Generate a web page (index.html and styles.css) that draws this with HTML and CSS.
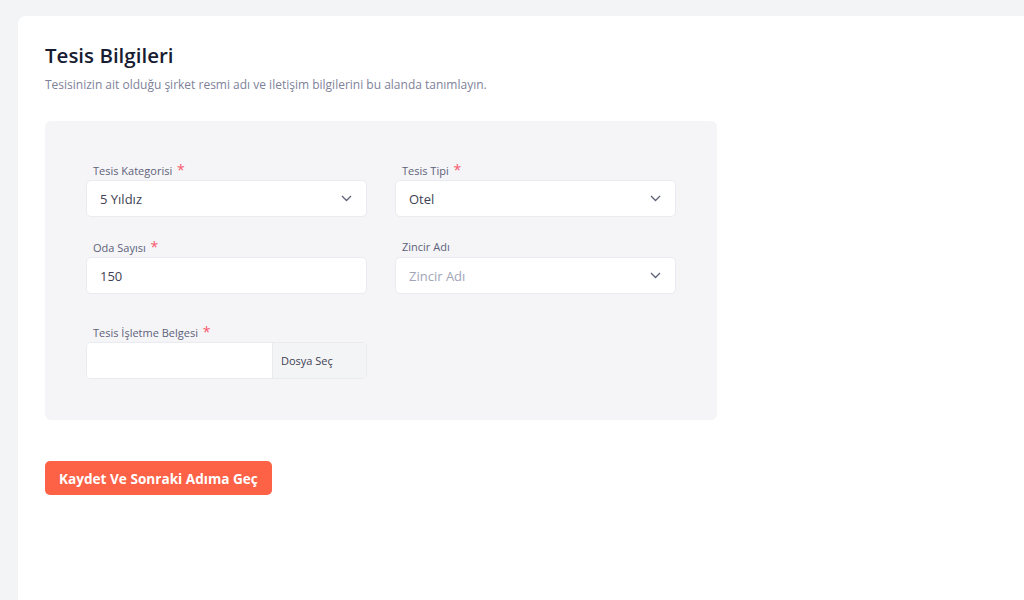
FILE: index.html
```html
<!DOCTYPE html>
<html lang="tr">
<head>
<meta charset="utf-8">
<title>Tesis Bilgileri</title>
<link rel="stylesheet" href="styles.css">
</head>
<body>
<main class="card">
  <h1 class="title">Tesis Bilgileri</h1>
  <p class="subtitle">Tesisinizin ait olduğu şirket resmi adı ve iletişim bilgilerini bu alanda tanımlayın.</p>

  <form class="panel">
    <div class="grid">
      <div class="field">
        <label class="label">Tesis Kategorisi <span class="req">*</span></label>
        <div class="control select">
          <span class="value">5 Yıldız</span>
          <svg class="chev" width="11" height="7" viewBox="0 0 11 7"><path d="M1 1l4.5 4.5L10 1" fill="none" stroke="#5e6278" stroke-width="1.3"/></svg>
        </div>
      </div>
      <div class="field">
        <label class="label">Tesis Tipi <span class="req">*</span></label>
        <div class="control select">
          <span class="value">Otel</span>
          <svg class="chev" width="11" height="7" viewBox="0 0 11 7"><path d="M1 1l4.5 4.5L10 1" fill="none" stroke="#5e6278" stroke-width="1.3"/></svg>
        </div>
      </div>
      <div class="field">
        <label class="label">Oda Sayısı <span class="req">*</span></label>
        <div class="control">
          <span class="value">150</span>
        </div>
      </div>
      <div class="field">
        <label class="label">Zincir Adı</label>
        <div class="control select">
          <span class="value placeholder">Zincir Adı</span>
          <svg class="chev" width="11" height="7" viewBox="0 0 11 7"><path d="M1 1l4.5 4.5L10 1" fill="none" stroke="#5e6278" stroke-width="1.3"/></svg>
        </div>
      </div>
      <div class="field field-wide-gap">
        <label class="label">Tesis İşletme Belgesi <span class="req">*</span></label>
        <div class="control file">
          <span class="file-name"></span>
          <span class="file-btn">Dosya Seç</span>
        </div>
      </div>
    </div>
  </form>

  <button class="submit" type="button">Kaydet Ve Sonraki Adıma Geç</button>
</main>
</body>
</html>
```

FILE: styles.css
```css
html, body {
  margin: 0;
  height: 100%;
}

body {
  background: #f3f4f6;
  font-family: "Open Sans", "Noto Sans", sans-serif;
  color: #181c32;
  overflow: hidden;
}

.card {
  margin: 16px 0 0 18px;
  background: #ffffff;
  border-radius: 8px 0 0 0;
  min-height: calc(100% - 16px);
  padding: 25px 27px 0;
  box-sizing: border-box;
}

.title {
  margin: 0;
  font-size: 20.5px;
  font-weight: 600;
  line-height: 28px;
  color: #181c32;
}

.subtitle {
  margin: 7px 0 0;
  font-size: 12px;
  line-height: 18px;
  color: #7e8299;
}

.panel {
  margin-top: 27px;
  width: 672px;
  box-sizing: border-box;
  background: #f5f5f8;
  border-radius: 6px;
  padding: 41px 41px 41px;
}

.grid {
  display: grid;
  grid-template-columns: 281px 281px;
  column-gap: 28px;
  row-gap: 22px;
}

.field-wide-gap {
  margin-top: 8px;
}

.label {
  display: block;
  padding-left: 7px;
  font-size: 11px;
  line-height: 16px;
  height: 17px;
  color: #5e6278;
  margin-bottom: 1px;
}

.req {
  color: #f5576c;
  font-size: 14px;
  margin-left: 2px;
}

.control {
  height: 37px;
  box-sizing: border-box;
  background: #ffffff;
  border: 1px solid #eaebf0;
  border-radius: 5px;
  display: flex;
  align-items: center;
  padding: 0 14px 0 13px;
}

.select {
  justify-content: space-between;
}

.value {
  font-size: 13px;
  color: #3f4254;
}

.placeholder {
  color: #a1a5b7;
}

.chev {
  display: block;
}

.file {
  padding: 0;
  overflow: hidden;
}

.file-name {
  flex: 1;
  align-self: stretch;
  background: #ffffff;
}

.file-btn {
  width: 94px;
  align-self: stretch;
  display: flex;
  align-items: center;
  padding-left: 8px;
  box-sizing: border-box;
  background: #f3f4f6;
  border-left: 1px solid #eaebf0;
  font-size: 11px;
  color: #3f4254;
}

.submit {
  margin-top: 41px;
  height: 34px;
  padding: 0 14px;
  border: none;
  border-radius: 5px;
  background: #fd6146;
  color: #ffffff;
  font-family: "Open Sans", "Noto Sans", sans-serif;
  font-size: 13.6px;
  font-weight: 700;
  cursor: pointer;
}
```
